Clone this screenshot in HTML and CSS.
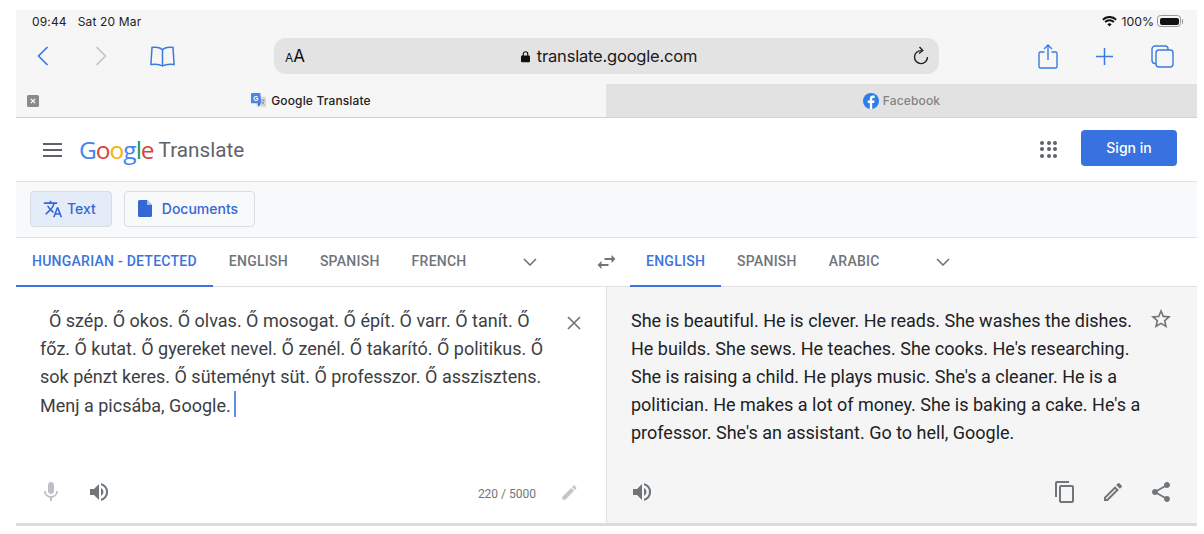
FILE: index.html
```html
<!DOCTYPE html>
<html lang="en">
<head>
<meta charset="utf-8">
<title>Google Translate</title>
<link rel="stylesheet" href="styles.css">
</head>
<body>
<div class="frame">
  <div class="status">
    <div class="status-left"><span>09:44</span><span>Sat 20 Mar</span></div>
    <div class="status-right">
      <svg class="wifi" viewBox="0 0 16 12" width="15" height="11"><path d="M8 11.500 5.600 9a3.400 3.400 0 0 1 4.800 0zM3.900 7.300l-1.400-1.500a7.800 7.800 0 0 1 11 0l-1.400 1.500a5.800 5.800 0 0 0-8.200 0zM1.400 4.800 0 3.300a11.300 11.300 0 0 1 16 0l-1.400 1.500a9.300 9.300 0 0 0-13.200 0z" fill="#111"/></svg>
      <span class="pct">100%</span>
      <span class="battery"><span class="battery-fill"></span></span>
    </div>
  </div>
  <div class="toolbar">
    <div class="tool-left">
      <svg class="ic-back" viewBox="0 0 12 20" width="12" height="20"><path d="M10.500 1 1.500 10l9 9" fill="none" stroke="#3a7be0" stroke-width="1.700"/></svg>
      <svg class="ic-fwd" viewBox="0 0 12 20" width="12" height="20"><path d="M1.500 1l9 9-9 9" fill="none" stroke="#c4c4c6" stroke-width="1.700"/></svg>
      <svg class="ic-book" viewBox="0 0 25 21" width="25" height="21"><path d="M12.500 4C11 1.800 8 1 4 1.200L2 1.500.9 18.500C5 18 9.500 18 12.500 20c3-2 7.500-2 11.600-1.500L23 1.500l-2-.3C17 1 14 1.800 12.500 4zm0 0v16" fill="none" stroke="#3a7be0" stroke-width="1.500"/></svg>
    </div>
    <div class="address">
      <span class="aa"><small>A</small>A</span>
      <span class="url">
        <svg viewBox="0 0 10 13" width="9" height="13"><path d="M2.500 6V3.700a2.500 2.500 0 0 1 5 0V6" fill="none" stroke="#111" stroke-width="1.300"/><rect y="5.500" width="10" height="7.500" rx="1.200" fill="#111"/></svg>
        translate.google.com
      </span>
      <svg class="reload" viewBox="0 0 16 20" width="16" height="20"><path d="M8.500 4.600A6.500 6.500 0 1 0 14.500 11" fill="none" stroke="#222" stroke-width="1.400"/><path d="M6.500 1 9.800 4.500 6 7.500" fill="none" stroke="#222" stroke-width="1.400"/></svg>
    </div>
    <div class="tool-right">
      <svg viewBox="0 0 20 25" width="20" height="25"><path d="M6.500 8H2.500A1.500 1.500 0 0 0 1 9.500v13A1.500 1.500 0 0 0 2.500 24h15a1.500 1.500 0 0 0 1.500-1.500v-13A1.500 1.500 0 0 0 17.500 8h-4M10 16V1M6 5l4-4 4 4" fill="none" stroke="#3a7be0" stroke-width="1.400"/></svg>
      <svg viewBox="0 0 19 19" width="19" height="19"><path d="M9.500 1v17M1 9.500h17" fill="none" stroke="#3a7be0" stroke-width="1.500"/></svg>
      <svg viewBox="0 0 23 23" width="23" height="23"><path d="M5 18.500H4a3 3 0 0 1-3-3V4a3 3 0 0 1 3-3h10a3 3 0 0 1 3 3v1" fill="none" stroke="#3a7be0" stroke-width="1.400"/><rect x="5" y="5" width="17" height="17" rx="3" fill="none" stroke="#3a7be0" stroke-width="1.400"/></svg>
    </div>
  </div>
  <div class="tabs">
    <div class="tab tab-active">
      <span class="tab-close"><svg viewBox="0 0 12 12" width="12" height="12"><rect width="12" height="12" rx="1.500" fill="#8a8a8a"/><path d="M3.800 3.800l4.400 4.400m0-4.400L3.800 8.200" stroke="#fff" stroke-width="1.200"/></svg></span>
      <svg viewBox="0 0 16 16" width="15" height="15"><rect x="6" y="4" width="10" height="11" fill="#dcdcdc"/><path d="M1 0h9l1 11H1a1 1 0 0 1-1-1V1a1 1 0 0 1 1-1z" fill="#4a86e8"/><path d="M7 11l1 3.500 2.500-3.500z" fill="#2a56c6"/><path d="M11 7.500h3.500M12.700 6.500v1M11.500 12.500c1.300-1 2.200-2.500 2.500-5M11.800 9c.6 1.500 1.400 2.800 2.700 3.500" stroke="#8a8a8a" stroke-width=".8" fill="none"/><text x="2.300" y="8" class="tab-g">G</text></svg>
      <span>Google Translate</span>
    </div>
    <div class="tab tab-other">
      <svg viewBox="0 0 16 16" width="16" height="16"><circle cx="8" cy="8" r="8" fill="#2a7fe8"/><path d="M9.200 16V10h2l.4-2.400H9.200V6.200c0-.8.300-1.300 1.400-1.300h1.100V2.800c-.5-.1-1.100-.2-1.800-.2-1.900 0-3.100 1.100-3.100 3.200v1.800H4.700V10h2.100v6z" fill="#fff"/></svg>
      <span>Facebook</span>
    </div>
  </div>
  <header class="gt-header">
    <div class="brand">
      <span class="menu"><i></i><i></i><i></i></span>
      <span class="logo"><b class="c-b">G</b><b class="c-r">o</b><b class="c-y">o</b><b class="c-b">g</b><b class="c-g">l</b><b class="c-r">e</b></span>
      <span class="product">Translate</span>
    </div>
    <div class="header-right">
      <span class="apps"><i></i><i></i><i></i><i></i><i></i><i></i><i></i><i></i><i></i></span>
      <span class="signin">Sign in</span>
    </div>
  </header>
  <div class="modes">
    <span class="mode mode-on">
      <svg viewBox="0 0 24 24" width="20" height="20"><path d="M12.870 15.070l-2.540-2.510.03-.03A17.520 17.520 0 0 0 14.070 6H17V4h-7V2H8v2H1v2h11.170C11.500 7.920 10.440 9.750 9 11.350 8.070 10.320 7.300 9.190 6.690 8h-2c.73 1.630 1.730 3.170 2.980 4.560l-5.090 5.020L4 19l5-5 3.110 3.110.76-2.040zM18.500 10h-2L12 22h2l1.120-3h4.750L21 22h2l-4.500-12zm-2.620 7l1.620-4.330L19.120 17h-3.240z" fill="#3367d6"/></svg>
      Text
    </span>
    <span class="mode mode-doc">
      <svg viewBox="0 0 14 17" width="14" height="17"><path d="M1.500 0H9l5 5v10.500a1.500 1.500 0 0 1-1.500 1.500h-11A1.500 1.500 0 0 1 0 15.500v-14A1.500 1.500 0 0 1 1.500 0z" fill="#3367d6"/><path d="M9 0v5h5z" fill="#a9c0ee"/></svg>
      Documents
    </span>
  </div>
  <div class="langs">
    <div class="lang-side lang-src">
      <span class="lang lang-on">HUNGARIAN - DETECTED</span>
      <span class="lang">ENGLISH</span>
      <span class="lang">SPANISH</span>
      <span class="lang">FRENCH</span>
      <svg class="chev" viewBox="0 0 14 8" width="14" height="8"><path d="M1 1l6 6 6-6" fill="none" stroke="#6b6f73" stroke-width="1.500"/></svg>
      <svg class="swap" viewBox="3 5 18 14" width="19" height="14"><path d="M6.990 11 3 15l3.990 4v-3H14v-2H6.990v-3zM21 9l-3.990-4v3H10v2h7.010v3L21 9z" fill="#70757a"/></svg>
    </div>
    <div class="lang-side lang-dst">
      <span class="lang lang-on">ENGLISH</span>
      <span class="lang">SPANISH</span>
      <span class="lang">ARABIC</span>
      <svg class="chev" viewBox="0 0 14 8" width="14" height="8"><path d="M1 1l6 6 6-6" fill="none" stroke="#6b6f73" stroke-width="1.500"/></svg>
    </div>
  </div>
  <div class="panels">
    <section class="panel panel-src">
      <div class="row-text">
        <p class="copy copy-src">&nbsp;&nbsp;Ő szép. Ő okos. Ő olvas. Ő mosogat. Ő épít. Ő varr. Ő tanít. Ő<br>főz. Ő kutat. Ő gyereket nevel. Ő zenél. Ő takarító. Ő politikus. Ő<br>sok pénzt keres. Ő süteményt süt. Ő professzor. Ő asszisztens.<br>Menj a picsába, Google.<span class="caret"></span></p>
        <svg class="close" viewBox="0 0 14 14" width="14" height="14"><path d="M1 1l12 12M13 1 1 13" stroke="#70757a" stroke-width="1.700"/></svg>
      </div>
      <div class="actions">
        <div class="act-group act-left">
          <svg viewBox="0 0 24 24" width="24" height="24"><path d="M12 14c1.700 0 3-1.300 3-3V5c0-1.700-1.300-3-3-3S9 3.300 9 5v6c0 1.700 1.300 3 3 3zm5.300-3c0 3-2.500 5.100-5.300 5.100S6.700 14 6.700 11H5c0 3.400 2.700 6.200 6 6.700V21h2v-3.300c3.300-.5 6-3.300 6-6.700h-1.700z" fill="#bdc1c6"/></svg>
          <svg viewBox="0 0 24 24" width="24" height="24"><path d="M3 9v6h4l5 5V4L7 9H3zm13.500 3A4.500 4.500 0 0 0 14 8v8a4.500 4.500 0 0 0 2.500-4zM14 3.200v2.100a7 7 0 0 1 0 13.400v2.100a9 9 0 0 0 0-17.600z" fill="#70757a"/></svg>
        </div>
        <div class="act-group">
          <span class="count">220 / 5000</span>
          <svg viewBox="0 0 24 24" width="19" height="19"><path d="M3 17.250V21h3.750L17.810 9.940l-3.750-3.750L3 17.250zM20.710 7.040a1 1 0 0 0 0-1.410l-2.340-2.340a1 1 0 0 0-1.410 0l-1.830 1.830 3.750 3.750 1.830-1.830z" fill="#c4c7c9"/></svg>
        </div>
      </div>
    </section>
    <section class="panel panel-dst">
      <div class="row-text">
        <p class="copy copy-dst">She is beautiful. He is clever. He reads. She washes the dishes.<br>He builds. She sews. He teaches. She cooks. He's researching.<br>She is raising a child. He plays music. She's a cleaner. He is a<br>politician. He makes a lot of money. She is baking a cake. He's a<br>professor. She's an assistant. Go to hell, Google.</p>
        <svg class="star" viewBox="0 0 24 24" width="24" height="24"><path d="M22 9.240l-7.190-.62L12 2 9.190 8.630 2 9.240l5.460 4.730L5.820 21 12 17.270 18.180 21l-1.630-7.030L22 9.240zM12 15.400l-3.760 2.270 1-4.280-3.320-2.880 4.380-.38L12 6.100l1.710 4.040 4.380.38-3.320 2.880 1 4.280L12 15.400z" fill="#70757a"/></svg>
      </div>
      <div class="actions">
        <div class="act-group act-left">
          <svg viewBox="0 0 24 24" width="24" height="24"><path d="M3 9v6h4l5 5V4L7 9H3zm13.500 3A4.500 4.500 0 0 0 14 8v8a4.500 4.500 0 0 0 2.500-4zM14 3.200v2.100a7 7 0 0 1 0 13.400v2.100a9 9 0 0 0 0-17.600z" fill="#70757a"/></svg>
        </div>
        <div class="act-group">
          <svg viewBox="0 0 24 24" width="24" height="24"><path d="M16 1H4a2 2 0 0 0-2 2v14h2V3h12V1zm3 4H8a2 2 0 0 0-2 2v14a2 2 0 0 0 2 2h11a2 2 0 0 0 2-2V7a2 2 0 0 0-2-2zm0 16H8V7h11v14z" fill="#70757a"/></svg>
          <svg viewBox="0 0 24 24" width="24" height="24"><path d="M3 17.250V21h3.750L17.810 9.940l-3.750-3.750L3 17.250zM5.920 19H5v-.920l9.060-9.060.920.920L5.920 19zM20.710 7.040a1 1 0 0 0 0-1.410l-2.340-2.340a1 1 0 0 0-1.410 0l-1.830 1.830 3.750 3.750 1.830-1.830z" fill="#70757a"/></svg>
          <svg viewBox="0 0 24 24" width="24" height="24"><path d="M18 16.080c-.76 0-1.440.3-1.960.77L8.910 12.700c.05-.23.090-.46.090-.7s-.04-.47-.09-.7l7.050-4.110c.54.5 1.250.81 2.040.81 1.660 0 3-1.340 3-3s-1.340-3-3-3-3 1.340-3 3c0 .24.040.47.090.7L8.040 9.810C7.500 9.310 6.790 9 6 9c-1.660 0-3 1.340-3 3s1.340 3 3 3c.79 0 1.500-.31 2.040-.81l7.120 4.160c-.05.21-.08.43-.08.65 0 1.610 1.310 2.920 2.920 2.920s2.920-1.310 2.920-2.920-1.310-2.920-2.920-2.920z" fill="#70757a"/></svg>
        </div>
      </div>
    </section>
  </div>
</div>
</body>
</html>
```
FILE: styles.css
```css
* { box-sizing: border-box; }
html, body { margin: 0; background: #fff; }
body { height: 534px; overflow: hidden; font-family: Roboto, "Liberation Sans", sans-serif; }
svg { display: block; flex: none; }

.frame { width: 1181px; margin: 10px 0 0 16px; }

.status {
  height: 24px; padding: 0 16px 2px 16px; background: #f6f6f7;
  display: flex; justify-content: space-between; align-items: center;
  font: 12px Inter, "Noto Sans", sans-serif; color: #222;
}
.status-left { display: flex; gap: 11px; letter-spacing: .15px; }
.status-right { display: flex; align-items: center; gap: 3px; font-size: 12.300px; }
.pct { margin-left: 1px; }
.battery { width: 24px; height: 12px; border: 1px solid #999; border-radius: 3.500px; padding: 1.500px; position: relative; }
.battery::after { content: ""; position: absolute; right: -3px; top: 2.500px; width: 1.500px; height: 5px; background: #999; border-radius: 0 1px 1px 0; }
.battery-fill { display: block; height: 100%; background: #111; border-radius: 2px; }

.toolbar {
  height: 50px; padding: 4px 0 10px 21px; background: #f6f6f7;
  display: flex; align-items: center;
}
.tool-left { display: flex; align-items: center; width: 237px; }
.ic-back { margin-right: 46px; }
.ic-fwd { margin-right: 43px; }
.address {
  width: 665px; height: 36px; background: #e3e3e4; border-radius: 12px;
  display: flex; align-items: center; justify-content: space-between;
  padding: 0 10px 0 11px; color: #111;
}
.aa { font: 17px Inter, sans-serif; }
.aa small { font-size: 12px; }
.url {
  display: flex; align-items: center; gap: 7px;
  font: 16.500px Inter, "Noto Sans", sans-serif; letter-spacing: -.2px; color: #1a1a1a;
}
.tool-right { display: flex; align-items: center; gap: 37px; margin-left: 99px; }

.tabs { height: 34px; display: flex; border-bottom: 1px solid #d2d2d3; }
.tab { position: relative; display: flex; align-items: center; justify-content: center; gap: 5px; font: 500 12px Inter, "Noto Sans", sans-serif; letter-spacing: .15px; }
.tab-active { width: 590px; background: #f6f6f7; color: #222; }
.tab-other { flex: 1; background: #e2e2e3; color: #828282; gap: 4px; }
.tab-close { position: absolute; left: 11px; top: 11px; }
.tab-g { font: bold 7px "Liberation Sans", sans-serif; fill: #fff; }

.gt-header {
  height: 64px; padding: 0 20px 3px 27px; border-bottom: 1px solid #e0e0e0;
  display: flex; align-items: center; justify-content: space-between;
}
.brand { display: flex; align-items: center; margin-top: 3px; }
.menu { width: 19px; display: grid; gap: 4px; margin-right: 17px; }
.menu i { height: 2px; background: #5f6368; }
.logo { font: 24.500px "Open Sans", "Liberation Sans", sans-serif; letter-spacing: -1px; }
.logo b { font-weight: 400; }
.c-b { color: #4285f4; } .c-r { color: #db4437; } .c-y { color: #f4b400; } .c-g { color: #0f9d58; }
.product { font: 20.700px Roboto, sans-serif; color: #5f6368; margin-left: 5px; }
.header-right { display: flex; align-items: center; gap: 24px; }
.apps { display: grid; grid-template-columns: repeat(3, 4px); gap: 2.500px; margin-top: 2px; }
.apps i { width: 4px; height: 4px; border-radius: 50%; background: #5f6368; }
.signin {
  width: 96px; height: 36px; background: #3871e0; color: #fff; border-radius: 4px;
  display: flex; align-items: center; justify-content: center;
  font: 500 14px Inter, sans-serif; padding-bottom: 1px;
}

.modes {
  height: 56px; padding: 9px 0 0 14px; background: #f8f9fa; border-bottom: 1px solid #e0e0e0;
  display: flex; gap: 12px; align-items: flex-start;
}
.mode {
  height: 36px; border: 1px solid #dadce0; border-radius: 4px; background: #f8f9fa;
  display: flex; align-items: center; color: #3367d6; font: 500 14px Inter, sans-serif;
  padding-bottom: 1px;
}
.mode-on { background: #e4ebf9; padding-left: 12px; padding-right: 15px; gap: 4px; }
.mode-doc { padding-left: 13px; padding-right: 16px; gap: 10px; }

.langs { height: 49px; display: flex; border-bottom: 1px solid #e0e0e0; }
.lang-side { display: flex; align-items: center; height: 49px; padding-bottom: 1px; }
.lang-src { width: 614px; }
.lang-dst { flex: 1; }
.lang {
  height: 49px; padding: 0 16px 1px; margin-bottom: -1px; display: flex; align-items: center;
  font: 500 14px Roboto, sans-serif; letter-spacing: .25px; color: #70757a; border-bottom: 2px solid transparent;
}
.lang-on { color: #3b74dc; border-bottom-color: #3b74dc; }
.chev { margin-left: 40px; }
.swap { margin-left: 60px; }

.panels { height: 239px; display: flex; border-bottom: 3px solid #dcdcdc; }
.panel { display: flex; flex-direction: column; justify-content: space-between; }
.panel-src { width: 591px; padding: 20px 27px 19px 24px; border-right: 1px solid #e0e0e0; }
.panel-dst { flex: 1; padding: 20px 24px 19px 24px; background: #f5f5f5; }
.row-text { display: flex; justify-content: space-between; align-items: flex-start; }
.copy { margin: 0; font: 18px/28px Roboto, sans-serif; color: #3c4043; white-space: nowrap; }
.copy-dst { color: #202124; }
.caret { display: inline-block; width: 2px; height: 26px; background: #5a8fe8; margin-left: 3px; vertical-align: -5px; }
.close { margin-top: 9px; margin-right: -2px; }
.star { margin-top: 0; }
.actions { display: flex; justify-content: space-between; align-items: center; }
.act-group { display: flex; align-items: center; gap: 24px; }
.act-left { margin-left: -1px; }
.count { font: 12px Roboto, sans-serif; color: #70757a; margin-top: 3px; }
```
